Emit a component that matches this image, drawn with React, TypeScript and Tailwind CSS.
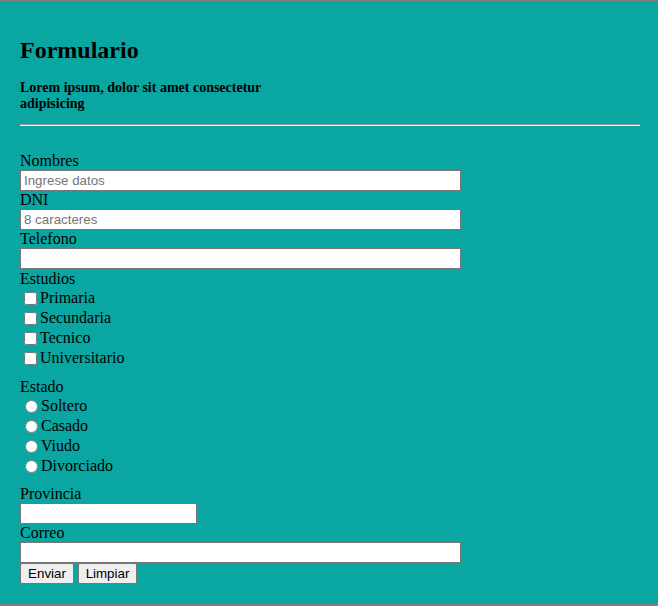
import React from 'react';

const estudios = ['Primaria', 'Secundaria', 'Tecnico', 'Universitario'];
const estados = ['Soltero', 'Casado', 'Viudo', 'Divorciado'];

const inputClass =
    "block h-[21px] bg-white border border-[#767676] px-[3px] text-[13.33px] text-black placeholder:text-[#757575] font-['Liberation_Sans',Arial,sans-serif] outline-none";
const buttonClass =
    "h-[21px] bg-[#efefef] border border-[#767676] rounded-[2px] text-[13.33px] text-black leading-none font-['Liberation_Sans',Arial,sans-serif]";

export default function App() {
    return (
        <div className="min-h-[606px] h-[606px] bg-[#09a6a2] border-t border-b-2 border-[#808080] pl-[20px] pr-[18px] pt-[35px] font-['Liberation_Serif','Times_New_Roman',serif] text-black text-[16px]">
            <h2 className="text-[24px] font-bold leading-[28px]">Formulario</h2>
            <h4 className="mt-[16px] w-[280px] text-[14px] font-bold leading-[16px]">
                Lorem ipsum, dolor sit amet consectetur adipisicing
            </h4>
            <hr className="mt-[12px] h-0 border-t border-t-[#9a9a9a] border-b border-b-[#f2f2f2]" />

            <form className="mt-[26px] flex flex-col" onSubmit={(e) => e.preventDefault()}>
                <label className="leading-[18px]">Nombres</label>
                <input type="text" placeholder="Ingrese datos" className={inputClass + ' w-[441px]'} />
                <label className="leading-[18px]">DNI</label>
                <input type="text" placeholder="8 caracteres" className={inputClass + ' w-[441px]'} />
                <label className="leading-[18px]">Telefono</label>
                <input type="text" className={inputClass + ' w-[441px]'} />

                <label className="leading-[19px]">Estudios</label>
                {estudios.map((item) => (
                    <div key={item} className="flex items-center h-[20px] leading-[20px]">
                        <input type="checkbox" className="w-[13px] h-[13px] ml-[4px] mr-[3px]" />
                        <span>{item}</span>
                    </div>
                ))}

                <label className="mt-[9px] leading-[19px]">Estado</label>
                {estados.map((item) => (
                    <div key={item} className="flex items-center h-[20px] leading-[20px]">
                        <input type="radio" name="estado" className="w-[13px] h-[13px] ml-[5px] mr-[3px]" />
                        <span>{item}</span>
                    </div>
                ))}

                <label className="mt-[9px] leading-[18px]">Provincia</label>
                <input type="text" className={inputClass + ' w-[177px]'} />
                <label className="leading-[18px]">Correo</label>
                <input type="email" className={inputClass + ' w-[441px]'} />

                <div className="flex gap-[4px]">
                    <button type="submit" className={buttonClass + ' w-[54px]'}>Enviar</button>
                    <button type="reset" className={buttonClass + ' w-[59px]'}>Limpiar</button>
                </div>
            </form>
        </div>
    );
}
